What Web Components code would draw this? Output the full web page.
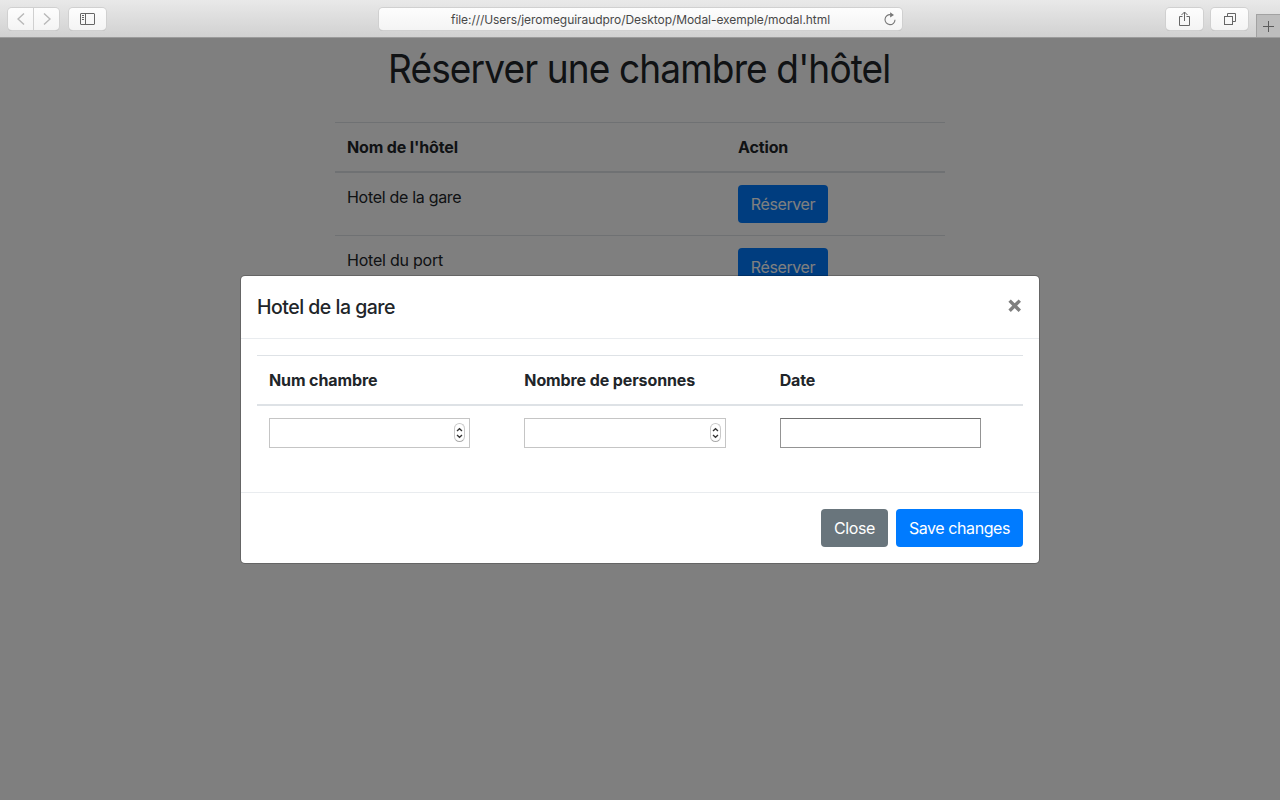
<!DOCTYPE html>
<html lang="fr">
<head>
<meta charset="utf-8">
<title>Réserver une chambre d'hôtel</title>
<style>
html,body{margin:0;height:100%}
body{font:400 16px/24px Inter,"Liberation Sans",sans-serif;color:#212529;background:#fff;overflow:hidden}
</style>
</head>
<body>
<safari-window></safari-window>
<script>
const define = (name, html) => customElements.define(name, class extends HTMLElement {
  constructor() {
    super();
    const t = document.createElement('template');
    t.innerHTML = '<style>*{box-sizing:border-box}</style>' + html;
    this.attachShadow({ mode: 'open' }).appendChild(t.content.cloneNode(true));
  }
});

define('tool-button', `
<style>
:host{display:flex;align-items:center;justify-content:center;height:22px;box-sizing:border-box;border-radius:4px;
background:linear-gradient(#fdfdfd,#f4f4f4);box-shadow:0 0 0 1px #d0d0d0,0 1px 0 0 #b3b3b3}
::slotted(svg){display:block}
</style><slot></slot>`);

define('address-bar', `
<style>
:host{display:flex;align-items:center;height:22px;width:523px;box-sizing:border-box;border-radius:4px;padding:0 5px 0 72px;
background:linear-gradient(#fdfdfd,#f4f4f4);box-shadow:0 0 0 1px #d0d0d0,0 1px 0 0 #b3b3b3;
font-size:12px;line-height:22px;color:#484848;justify-content:space-between}
.u{letter-spacing:-.06px;white-space:nowrap;padding-top:2px}
svg{display:block}
</style>
<span class="u"><slot></slot></span>
<svg width="14" height="14" viewBox="0 0 14 14" fill="none" stroke="#777" stroke-width="1.1"><path d="M7.600 2.700A5 5 0 1 0 12 7.700"/><path d="M7.100 .3 11 2.900 7.100 5.400z" fill="#777" stroke="none"/></svg>`);

define('browser-toolbar', `
<style>
:host{display:flex;height:38px;box-sizing:border-box;border-bottom:1px solid #9b9b9b;background:linear-gradient(#e9e9e9,#d1d1d1);position:relative;z-index:2;padding:8px 0 0 8px}
.back{width:25px;border-radius:4px 0 0 4px}.fwd{width:25px;margin-left:1px;border-radius:0 4px 4px 0}
.side{width:37px;margin-left:10px}
address-bar{margin-left:273px}
.share{width:37px;margin-left:264px}.tabs{width:37px;margin-left:8px}
.plus{margin:6px 0 0 8px;width:24px;height:23px;background:#bdbdbd;border:solid #a2a2a2;border-width:1px 0 0 1px;display:flex;align-items:center;justify-content:center;flex:none}
tool-button,address-bar{flex:none}
</style>
<tool-button class="back"><svg width="8" height="12" viewBox="0 0 8 12" fill="none" stroke="#b8b8b8" stroke-width="1.4"><path d="M7 .5 1 6l6 5.500"/></svg></tool-button>
<tool-button class="fwd"><svg width="8" height="12" viewBox="0 0 8 12" fill="none" stroke="#b8b8b8" stroke-width="1.4"><path d="M1 .5 7 6l-6 5.500"/></svg></tool-button>
<tool-button class="side"><svg width="15" height="12" viewBox="0 0 15 12" fill="none" stroke="#666"><rect x=".5" y=".5" width="14" height="11" rx=".5"/><path d="M5.500 0v12M2 2.500h2M2 4.500h2M2 6.500h2"/></svg></tool-button>
<address-bar>file:///Users/jeromeguiraudpro/Desktop/Modal-exemple/modal.html</address-bar>
<tool-button class="share"><svg width="11" height="16" viewBox="0 0 11 16" fill="none" stroke="#666"><path d="M3.500 5.500h-3v9h10v-9h-3M5.500 10V1.200M2.500 4l3-3 3 3"/></svg></tool-button>
<tool-button class="tabs"><svg width="12" height="12" viewBox="0 0 12 12" fill="none" stroke="#666"><rect x=".5" y="3.500" width="8" height="8"/><path d="M3.500 3V.5h8v8H9"/></svg></tool-button>
<div class="plus"><svg width="11" height="11" viewBox="0 0 11 11" stroke="#5b5b5b"><path d="M5.500 0v11M0 5.500h11"/></svg></div>`);

define('bs-button', `
<style>
:host{display:inline-flex;align-items:center;justify-content:center;height:38px;box-sizing:border-box;border-radius:4px;
background:var(--bg,#007bff);color:#fff;white-space:nowrap}
</style><span><slot></slot></span>`);

define('hotel-table', `
<style>
:host{display:block;width:610px}
.row{display:grid;grid-template-columns:391px 1fr;border-top:1px solid #dee2e6}
.row>*{padding:12px}
.head{font-weight:700;border-bottom:2px solid #dee2e6;letter-spacing:-.14px}
.head+.row{border-top:0}
.name{letter-spacing:-.3px}
.name.short{letter-spacing:-.22px}
bs-button{width:90px;letter-spacing:-.4px}
.btn{display:flex}
</style>
<div class="row head"><div>Nom de l'hôtel</div><div>Action</div></div>
<div class="row"><div class="name">Hotel de la gare</div><div class="btn"><bs-button>Réserver</bs-button></div></div>
<div class="row"><div class="name short">Hotel du port</div><div class="btn"><bs-button>Réserver</bs-button></div></div>`);

define('hotel-page', `
<style>
:host{display:flex;flex-direction:column;align-items:center;padding-top:7px}
h1{margin:0 2px 29px 0;font-weight:420;font-size:40px;line-height:48px;letter-spacing:-.95px;white-space:nowrap;transform:scaleX(.926)}
</style>
<h1>Réserver une chambre d'hôtel</h1>
<hotel-table></hotel-table>`);

define('number-field', `
<style>
:host{display:flex;align-items:center;justify-content:flex-end;width:201px;height:30px;box-sizing:border-box;border:1px solid #c5c5c5;padding:0 4px 1px 0;background:#fff}
.s{width:11px;height:19px;border-radius:5.500px;border:1px solid #c9c9c9;border-bottom-color:#aaa;display:flex;align-items:center;justify-content:center}
svg{display:block}
</style>
<div class="s"><svg width="7" height="12" viewBox="0 0 7 12" fill="none" stroke="#333" stroke-width="1.300"><path d="M1 4l2.500-2.300L6 4M1 8l2.500 2.300L6 8"/></svg></div>`);

define('date-field', `
<style>:host{display:block;width:201px;height:30px;box-sizing:border-box;border:1px solid #949494;border-top-color:#707070;background:#fff}</style>`);

define('booking-modal', `
<style>
:host{display:block;width:800px;box-sizing:border-box;background:#fff;background-clip:padding-box;border:1px solid rgba(0,0,0,.2);border-radius:5px}
header{display:flex;justify-content:space-between;padding:16px;border-bottom:1px solid #e9ecef;height:63px}
h5{margin:0;font-size:19.500px;line-height:30px;font-weight:540;letter-spacing:-.5px}
.x{margin:6px 1px 0 0;width:15px;height:15px}
.x svg{display:block}
.body{padding:16px 16px 32px}
.row{display:grid;grid-template-columns:repeat(3,1fr)}
.row>*{padding:12px}
.head{font-weight:700;border:solid #dee2e6;border-width:1px 0 2px;letter-spacing:-.11px}
.wide{width:201.500px}
footer{display:flex;justify-content:flex-end;gap:8px;padding:16px;border-top:1px solid #e9ecef}
.c{--bg:#69757c;width:67px;letter-spacing:-.35px}.v{width:127px;letter-spacing:-.42px}
</style>
<header><h5>Hotel de la gare</h5><div class="x"><svg width="15" height="15" viewBox="0 0 15 15" stroke="#7f7f7f" stroke-width="3.400"><path d="M2.600 2.600l10.200 10.200M12.800 2.600L2.600 12.800"/></svg></div></header>
<div class="body">
<div class="row head"><div>Num chambre</div><div>Nombre de personnes</div><div>Date</div></div>
<div class="row"><div><number-field></number-field></div><div><number-field class="wide"></number-field></div><div><date-field></date-field></div></div>
</div>
<footer><bs-button class="c">Close</bs-button><bs-button class="v">Save changes</bs-button></footer>`);

define('safari-window', `
<style>
:host{display:flex;flex-direction:column;height:800px;width:1280px}
main{flex:1;position:relative}
.overlay{position:absolute;inset:0;background:rgba(0,0,0,.5);display:flex;justify-content:center;align-items:flex-start;padding-top:237px}
</style>
<browser-toolbar></browser-toolbar>
<main><hotel-page></hotel-page><div class="overlay"><booking-modal></booking-modal></div></main>`);
</script>
</body>
</html>
